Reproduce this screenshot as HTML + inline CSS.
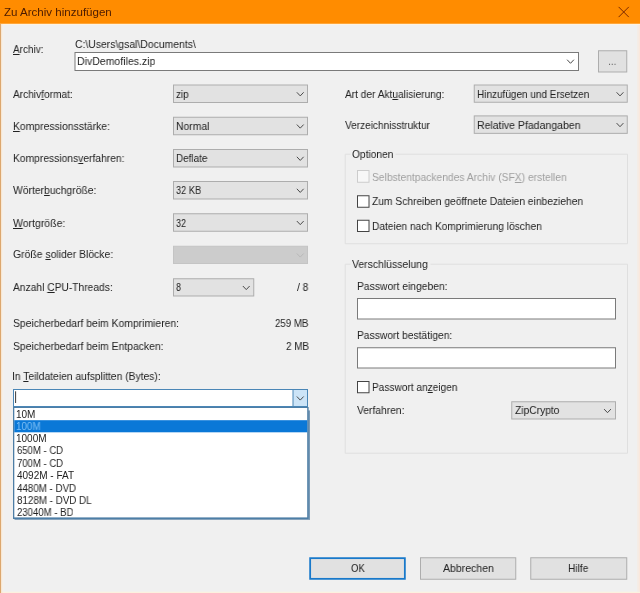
<!DOCTYPE html>
<html lang="de"><head><meta charset="utf-8"><title>Zu Archiv hinzufügen</title>
<style>
*{margin:0;padding:0;box-sizing:border-box}
html,body{width:640px;height:593px;overflow:hidden;background:#f0f0f0}
body{position:relative;font-family:"Liberation Sans",sans-serif;font-size:11px;line-height:14px;color:#222}
svg.bg{position:absolute;left:0;top:0;width:640px;height:593px;display:block}
.t{position:absolute;white-space:nowrap;height:14px;transform-origin:0 0;will-change:transform}
u{text-decoration:underline;text-underline-offset:1px}
</style></head>
<body>
<svg class="bg" width="640" height="593" viewBox="0 0 640 593">
<rect x="0.00" y="0.00" width="640.00" height="24.00" fill="#ff8c00"/>
<rect x="0.00" y="23.75" width="640.00" height="1.25" fill="#fdf3e2"/>
<rect x="0.00" y="591.75" width="640.00" height="1.25" fill="#fcf1df"/>
<rect x="0.00" y="24.00" width="1.20" height="569.00" fill="#dca76e"/>
<rect x="1.20" y="24.00" width="1.30" height="569.00" fill="#f9e9d4"/>
<rect x="2.50" y="25.00" width="1.00" height="566.75" fill="#f5f1ec"/>
<rect x="637.00" y="25.00" width="1.50" height="566.75" fill="#f4ede7"/>
<rect x="638.50" y="25.00" width="1.50" height="566.75" fill="#fae8dc"/>
<path d="M618.6 6.9 L628.8000000000001 17.1 M628.8000000000001 6.9 L618.6 17.1" stroke="#7a2800" stroke-width="1" fill="none"/>
<rect x="75.00" y="52.50" width="503.50" height="18.00" fill="#ffffff" stroke="#7a7a7a" stroke-width="1"/>
<path d="M567.10 59.70 L570.50 63.30 L573.90 59.70" fill="none" stroke="#4a4a4a" stroke-width="1"/>
<rect x="598.50" y="50.75" width="28.25" height="21.25" fill="#e1e1e1" stroke="#adadad" stroke-width="1"/>
<rect x="173.50" y="85.00" width="134.00" height="17.50" fill="#e2e2e2" stroke="#adadad" stroke-width="1"/>
<path d="M296.85 92.30 L300.25 95.90 L303.65 92.30" fill="none" stroke="#4a4a4a" stroke-width="1"/>
<rect x="173.50" y="117.25" width="134.00" height="17.50" fill="#e2e2e2" stroke="#adadad" stroke-width="1"/>
<path d="M296.85 124.55 L300.25 128.15 L303.65 124.55" fill="none" stroke="#4a4a4a" stroke-width="1"/>
<rect x="173.50" y="149.50" width="134.00" height="17.50" fill="#e2e2e2" stroke="#adadad" stroke-width="1"/>
<path d="M296.85 156.80 L300.25 160.40 L303.65 156.80" fill="none" stroke="#4a4a4a" stroke-width="1"/>
<rect x="173.50" y="181.50" width="134.00" height="17.50" fill="#e2e2e2" stroke="#adadad" stroke-width="1"/>
<path d="M296.85 188.80 L300.25 192.40 L303.65 188.80" fill="none" stroke="#4a4a4a" stroke-width="1"/>
<rect x="173.50" y="213.75" width="134.00" height="17.50" fill="#e2e2e2" stroke="#adadad" stroke-width="1"/>
<path d="M296.85 221.05 L300.25 224.65 L303.65 221.05" fill="none" stroke="#4a4a4a" stroke-width="1"/>
<rect x="173.50" y="246.25" width="134.00" height="17.25" fill="#cccccc" stroke="#c4c4c4" stroke-width="1"/>
<path d="M296.85 253.50 L300.25 257.10 L303.65 253.50" fill="none" stroke="#b8b8b8" stroke-width="1"/>
<rect x="173.50" y="278.75" width="80.25" height="17.25" fill="#e2e2e2" stroke="#adadad" stroke-width="1"/>
<path d="M242.85 286.00 L246.25 289.60 L249.65 286.00" fill="none" stroke="#4a4a4a" stroke-width="1"/>
<rect x="474.25" y="85.00" width="153.00" height="17.25" fill="#e2e2e2" stroke="#adadad" stroke-width="1"/>
<path d="M616.60 92.30 L620.00 95.90 L623.40 92.30" fill="none" stroke="#4a4a4a" stroke-width="1"/>
<rect x="474.25" y="115.90" width="153.00" height="17.45" fill="#e2e2e2" stroke="#adadad" stroke-width="1"/>
<path d="M616.60 123.10 L620.00 126.70 L623.40 123.10" fill="none" stroke="#4a4a4a" stroke-width="1"/>
<path d="M350.5 154.25 L345.25 154.25 L345.25 243.75 L627.5 243.75 L627.5 154.25 L395.5 154.25" fill="none" stroke="#dfdfdf" stroke-width="1"/>
<path d="M350.5 264.25 L345.25 264.25 L345.25 453.25 L627.5 453.25 L627.5 264.25 L430.5 264.25" fill="none" stroke="#dfdfdf" stroke-width="1"/>
<rect x="357.50" y="170.50" width="11.50" height="11.75" fill="#f7f7f7" stroke="#cccccc" stroke-width="1"/>
<rect x="357.50" y="195.75" width="11.50" height="11.50" fill="#ffffff" stroke="#444444" stroke-width="1"/>
<rect x="357.50" y="220.25" width="11.50" height="11.25" fill="#ffffff" stroke="#444444" stroke-width="1"/>
<rect x="357.50" y="381.50" width="11.50" height="11.25" fill="#ffffff" stroke="#444444" stroke-width="1"/>
<rect x="357.50" y="298.50" width="258.00" height="20.50" fill="#ffffff" stroke="#7a7a7a" stroke-width="1"/>
<rect x="357.50" y="347.75" width="258.00" height="20.25" fill="#ffffff" stroke="#7a7a7a" stroke-width="1"/>
<rect x="511.75" y="401.75" width="103.75" height="17.25" fill="#e2e2e2" stroke="#adadad" stroke-width="1"/>
<path d="M604.10 409.10 L607.50 412.70 L610.90 409.10" fill="none" stroke="#4a4a4a" stroke-width="1"/>
<rect x="13.50" y="389.50" width="294.00" height="17.00" fill="#ffffff" stroke="#4a86b6" stroke-width="1"/>
<rect x="293.00" y="389.50" width="14.50" height="17.00" fill="#cce4f7" stroke="#4a86b6" stroke-width="1"/>
<path d="M296.85 396.50 L300.25 400.10 L303.65 396.50" fill="none" stroke="#4a4a4a" stroke-width="1"/>
<rect x="15.10" y="391.30" width="1.00" height="11.70" fill="#3a3a3a"/>
<rect x="14.50" y="410.50" width="295.50" height="109.50" fill="#86a2bb"/>
<rect x="13.00" y="407.00" width="295.60" height="112.00" fill="#4d7ea6"/>
<rect x="308.60" y="410.50" width="0.70" height="108.50" fill="#5f88ab"/>
<rect x="14.30" y="408.00" width="292.90" height="109.40" fill="#ffffff"/>
<rect x="14.30" y="420.20" width="292.90" height="12.10" fill="#0a78d7"/>
<rect x="310.15" y="558.15" width="94.70" height="20.70" fill="#e1e1e1" stroke="#1979ca" stroke-width="1.8"/>
<rect x="420.50" y="557.75" width="95.25" height="21.50" fill="#e1e1e1" stroke="#adadad" stroke-width="1"/>
<rect x="530.75" y="557.75" width="96.00" height="21.50" fill="#e1e1e1" stroke="#adadad" stroke-width="1"/>
</svg>
<div class="t" style="left:4.00px;top:5.29px;transform:scaleX(1.0490);color:#4a1a00;">Zu Archiv hinzufügen</div>
<div class="t" style="left:13.00px;top:42.19px;transform:scaleX(0.9091);"><u>A</u>rchiv:</div>
<div class="t" style="left:75.00px;top:36.69px;transform:scaleX(0.9453);">C:\Users\gsal\Documents\</div>
<div class="t" style="left:77.00px;top:54.19px;transform:scaleX(0.9573);">DivDemofiles.zip</div>
<div class="t" style="left:13.00px;top:87.19px;transform:scaleX(0.9219);">Archiv<u>f</u>ormat:</div>
<div class="t" style="left:13.00px;top:119.19px;transform:scaleX(0.9436);"><u>K</u>ompressionsstärke:</div>
<div class="t" style="left:13.00px;top:151.19px;transform:scaleX(0.9349);">Kompressions<u>v</u>erfahren:</div>
<div class="t" style="left:13.00px;top:183.19px;transform:scaleX(0.9403);">Wörter<u>b</u>uchgröße:</div>
<div class="t" style="left:13.00px;top:215.69px;transform:scaleX(0.9537);"><u>W</u>ortgröße:</div>
<div class="t" style="left:13.00px;top:247.44px;transform:scaleX(0.9476);">Größe <u>s</u>olider Blöcke:</div>
<div class="t" style="left:13.00px;top:280.19px;transform:scaleX(0.9316);">Anzahl <u>C</u>PU-Threads:</div>
<div class="t" style="left:13.00px;top:315.69px;transform:scaleX(0.9429);">Speicherbedarf beim Komprimieren:</div>
<div class="t" style="left:13.00px;top:339.44px;transform:scaleX(0.9434);">Speicherbedarf beim Entpacken:</div>
<div class="t" style="left:12.46px;top:369.49px;transform:scaleX(0.9363);">In <u>T</u>eildateien aufsplitten (Bytes):</div>
<div class="t" style="left:176.10px;top:87.19px;transform:scaleX(0.8929);">zip</div>
<div class="t" style="left:176.10px;top:119.19px;transform:scaleX(0.9429);">Normal</div>
<div class="t" style="left:176.10px;top:151.19px;transform:scaleX(0.9000);">Deflate</div>
<div class="t" style="left:176.10px;top:183.19px;transform:scaleX(0.8417);">32 KB</div>
<div class="t" style="left:176.10px;top:215.69px;transform:scaleX(0.8333);">32</div>
<div class="t" style="left:176.10px;top:280.19px;transform:scaleX(0.8333);">8</div>
<div class="t" style="left:297.00px;top:280.19px;transform:scaleX(0.9375);">/ 8</div>
<div class="t" style="left:274.50px;top:315.69px;transform:scaleX(0.8816);">259 MB</div>
<div class="t" style="left:285.50px;top:339.44px;transform:scaleX(0.9000);">2 MB</div>
<div class="t" style="left:345.00px;top:87.19px;transform:scaleX(0.9229);">Art der Akt<u>u</u>alisierung:</div>
<div class="t" style="left:345.00px;top:118.19px;transform:scaleX(0.9140);">Verzeichnisstruktur</div>
<div class="t" style="left:476.80px;top:87.19px;transform:scaleX(0.9085);">Hinzufügen und Ersetzen</div>
<div class="t" style="left:476.80px;top:118.19px;transform:scaleX(0.9560);">Relative Pfadangaben</div>
<div class="t" style="left:351.60px;top:146.69px;transform:scaleX(0.9261);">Optionen</div>
<div class="t" style="left:371.70px;top:169.94px;transform:scaleX(0.9339);color:#a0a0a0;">Selbstentpackendes Archiv (SF<u>X</u>) erstellen</div>
<div class="t" style="left:371.70px;top:194.19px;transform:scaleX(0.9314);">Zum Schreiben <u>g</u>eöffnete Dateien einbeziehen</div>
<div class="t" style="left:371.70px;top:218.69px;transform:scaleX(0.9262);">Dateien nach Komprimierung löschen</div>
<div class="t" style="left:351.60px;top:257.19px;transform:scaleX(0.9469);">Verschlüsselung</div>
<div class="t" style="left:356.80px;top:279.19px;transform:scaleX(0.9375);">Passwort eingeben:</div>
<div class="t" style="left:356.80px;top:327.94px;transform:scaleX(0.9332);">Passwort bestätigen:</div>
<div class="t" style="left:371.70px;top:379.69px;transform:scaleX(0.9194);">Passwort an<u>z</u>eigen</div>
<div class="t" style="left:356.80px;top:402.94px;transform:scaleX(0.9350);">Verfahren:</div>
<div class="t" style="left:514.50px;top:402.94px;transform:scaleX(0.9309);">ZipCrypto</div>
<div class="t" style="left:15.60px;top:407.69px;transform:scaleX(1.0000);font-size:10px;">10M</div>
<div class="t" style="left:15.62px;top:419.94px;transform:scaleX(0.9792);font-size:10px;color:#7fc0f5;">100M</div>
<div class="t" style="left:15.61px;top:432.44px;transform:scaleX(0.9914);font-size:10px;">1000M</div>
<div class="t" style="left:16.60px;top:444.44px;transform:scaleX(0.9531);font-size:10px;">650M - CD</div>
<div class="t" style="left:16.60px;top:456.94px;transform:scaleX(0.9531);font-size:10px;">700M - CD</div>
<div class="t" style="left:16.60px;top:468.94px;transform:scaleX(1.0000);font-size:10px;">4092M - FAT</div>
<div class="t" style="left:16.60px;top:481.94px;transform:scaleX(0.9750);font-size:10px;">4480M - DVD</div>
<div class="t" style="left:16.60px;top:493.94px;transform:scaleX(0.9803);font-size:10px;">8128M - DVD DL</div>
<div class="t" style="left:16.60px;top:505.94px;transform:scaleX(0.9576);font-size:10px;">23040M - BD</div>
<div class="t" style="left:350.50px;top:561.44px;transform:scaleX(0.8750);">OK</div>
<div class="t" style="left:442.50px;top:561.44px;transform:scaleX(0.9575);">Abbrechen</div>
<div class="t" style="left:568.00px;top:561.44px;transform:scaleX(0.9205);">Hilfe</div>
<div class="t" style="left:607.82px;top:54.19px;transform:scaleX(0.9286);color:#666;">...</div>
</body></html>
